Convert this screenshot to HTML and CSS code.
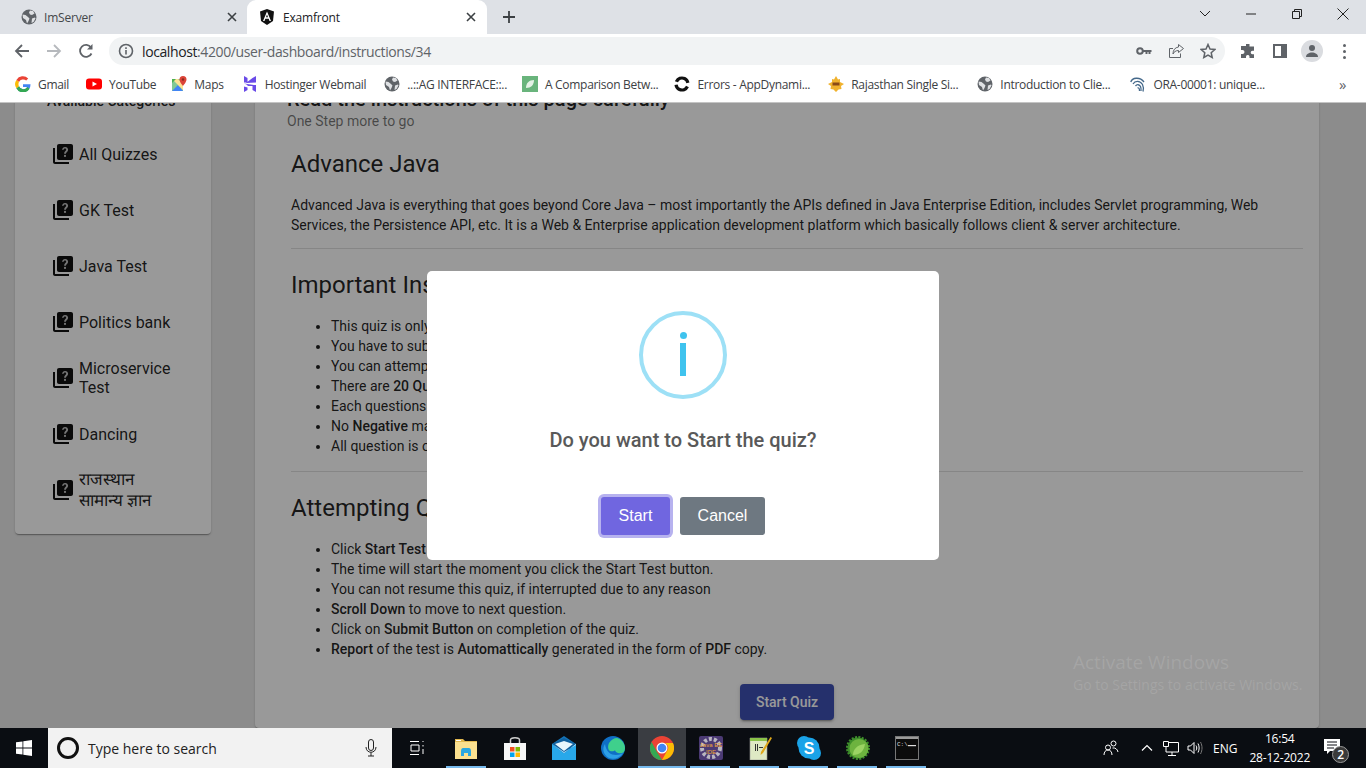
FILE: index.html
```html
<!DOCTYPE html>
<html>
  <head>
    <title>Examfront</title>
    <link rel="stylesheet" href="styles.css">
  </head>
  <body>
    <svg class="defs" width="0" height="0">
      <symbol id="globe" viewBox="0 0 16 16">
        <circle cx="8" cy="8" r="7.5" fill="#5f6368"/>
        <path d="M1.500 5.500l3 .5 2.500 2 1.500 1.500-1 2.500-1.500 2.500-1-3.500-3-2zM9 1.500l3 .5 1.500 2.500-2.500 1.500-2-.5-1-2zM11 9.500l3-1 .5 1-2 3.500-2 1z" fill="#dfe1e4"/>
      </symbol>
      <symbol id="quiz" viewBox="0 0 24 24">
        <path d="M4 6H2v14c0 1.100.9 2 2 2h14v-2H4V6z" fill="#111"/>
        <path d="M20 2H8c-1.100 0-2 .9-2 2v12c0 1.100.9 2 2 2h12c1.100 0 2-.9 2-2V4c0-1.100-.9-2-2-2z" fill="#111"/>
        <path d="M14 12.800a1.100 1.100 0 110 2.200 1.100 1.100 0 010-2.200zM11 7.800C11.300 6.200 12.500 5 14.100 5c1.800 0 3 1.200 3 2.700 0 2.200-2.100 2.300-2.200 4h-1.800c0-2.500 2.100-2.600 2.100-4 0-.7-.5-1.200-1.200-1.200-.7 0-1.200.5-1.400 1.300z" fill="#c4c4c4"/>
      </symbol>
    </svg>

    <div class="tabstrip">
      <div class="tab">
        <svg class="fav"><use href="#globe"/></svg>
        <span class="tab-title">ImServer</span>
        <svg class="tab-x" viewBox="0 0 10 10"><path d="M1 1l8 8M9 1l-8 8"/></svg>
      </div>
      <div class="tab tab-active">
        <svg class="fav" viewBox="0 0 16 16">
          <path d="M8 0L1 2.500l1 9.500L8 16l6-4 1-9.500z" fill="#111"/>
          <path d="M8 2.500L4 12h1.500l.8-2.200h3.400l.8 2.200H12zM7 8.300l1-2.800 1 2.800z" fill="#fff"/>
        </svg>
        <span class="tab-title">Examfront</span>
        <svg class="tab-x" viewBox="0 0 10 10"><path d="M1 1l8 8M9 1l-8 8"/></svg>
      </div>
      <svg class="new-tab" viewBox="0 0 12 12"><path d="M6 0v12M0 6h12"/></svg>
      <div class="win-btns">
        <svg class="win-chev" viewBox="0 0 12 8"><path d="M1 1l5 5 5-5"/></svg>
        <svg class="win-min" viewBox="0 0 10 2"><path d="M0 1h10"/></svg>
        <svg class="win-max" viewBox="0 0 10 10"><path d="M.5 2.500h7v7h-7zM2.500 2.500v-2h7v7h-2"/></svg>
        <svg class="win-close" viewBox="0 0 12 12"><path d="M.5.5l11 11M11.500.5l-11 11"/></svg>
      </div>
    </div>

    <div class="toolbar">
      <svg class="nav-ic" viewBox="0 0 16 16"><path d="M15 8H2M8 2L2 8l6 6" stroke="#5f6368"/></svg>
      <svg class="nav-ic" viewBox="0 0 16 16"><path d="M1 8h13M8 2l6 6-6 6" stroke="#b6b9bd"/></svg>
      <svg class="nav-ic" viewBox="0 0 16 16"><path d="M13.500 10.500A6 6 0 1113 4.500" stroke="#5f6368"/><path d="M14.500 1v5.500H9z" fill="#5f6368" stroke="none"/></svg>
      <div class="omnibox">
        <svg class="info-ic" viewBox="0 0 16 16"><circle cx="8" cy="8" r="6.500" fill="none" stroke="#5f6368" stroke-width="1.600"/><path d="M7.200 7h1.600v4.500H7.200zM7.200 4.300h1.600v1.600H7.200z" fill="#5f6368"/></svg>
        <span class="url"><b>localhost</b>:4200/user-dashboard/instructions/34</span>
        <svg class="omni-ic" viewBox="0 0 16 16"><circle cx="4" cy="8" r="2.800" fill="none" stroke="#5f6368" stroke-width="2"/><path d="M6.500 7h9v2h-1v2h-2V9h-1v2h-2V9h-3z" fill="#5f6368"/></svg>
        <svg class="omni-ic" viewBox="0 0 16 16"><path d="M10.500 1.500l5 4-5 4V7.500C7.500 7.500 6 9 5 11c0-4 2-6.500 5.500-7zM12.500 10.500v4H1.500v-9H5" fill="none" stroke="#5f6368"/></svg>
        <svg class="omni-ic" viewBox="0 0 16 16"><path d="M8 1.500l2 4.500 4.800.5-3.600 3.200 1 4.800L8 12l-4.200 2.500 1-4.800L1.200 6.500 6 6z" fill="none" stroke="#5f6368" stroke-width="1.500"/></svg>
      </div>
      <svg class="tool-ic tool-ext" viewBox="0 0 16 16"><path d="M6 1h3.500v2.500H14v4.200h-1.500a1.800 1.800 0 000 3.600H14V15H9.500v-1.500a1.800 1.800 0 00-3.500 0V15H1v-4h1.500a2 2 0 000-4H1V3h5z" fill="#5f6368"/></svg>
      <svg class="tool-ic" viewBox="0 0 16 16"><path d="M1 1h14v14H1zM3 3v10h6V3z" fill="#5f6368" fill-rule="evenodd"/></svg>
      <div class="avatar">
        <svg viewBox="0 0 24 24"><circle cx="12" cy="8" r="4" fill="#5f6368"/><path d="M4 20c0-4 4-6 8-6s8 2 8 6z" fill="#5f6368"/></svg>
      </div>
      <div class="kebab"><i></i><i></i><i></i></div>
    </div>

    <div class="bookmarks">
      <div class="bm">
        <svg class="fav" viewBox="0 0 16 16"><path d="M15.500 8.200H8v2.800h4.300A4.600 4.600 0 014 10.300L1.400 12.300A7.600 7.600 0 0015.500 8.200z" fill="#4285f4"/><path d="M1.400 12.300L4 10.300a4.600 4.600 0 008.300.7l2.300 1.800A7.600 7.600 0 011.400 12.300z" fill="#34a853"/><path d="M1.400 3.900A7.600 7.600 0 0113.200 2.500l-2 2A4.700 4.700 0 004 6z" fill="#ea4335"/><path d="M1.400 3.900L4 6a4.700 4.700 0 000 4.300l-2.600 2a7.600 7.600 0 010-8.400z" fill="#fbbc05"/></svg>
        <span>Gmail</span>
      </div>
      <div class="bm">
        <svg class="fav" viewBox="0 0 16 16"><rect y="2.500" width="16" height="11" rx="3" fill="#f00"/><path d="M6.500 5.500v5L11 8z" fill="#fff"/></svg>
        <span>YouTube</span>
      </div>
      <div class="bm bm-maps">
        <svg class="fav" viewBox="0 0 16 16"><path d="M1 3h11v12H1z" fill="#81c995"/><path d="M1 15l6-6 5 6z" fill="#4285f4"/><path d="M1 3l11 11V8L7 3z" fill="#fde293"/><path d="M5 3L1 7V3z" fill="#4caf50"/><path d="M12 0a3.500 3.500 0 00-3.500 3.500C8.500 6 12 10 12 10s3.500-4 3.500-6.500A3.500 3.500 0 0012 0z" fill="#db4437"/><circle cx="12" cy="3.500" r="1.200" fill="#8b2a20"/></svg>
        <span>Maps</span>
      </div>
      <div class="bm bm-host">
        <svg class="fav" viewBox="0 0 16 16"><path d="M2 0l3.500 2v4.500H2zM10.500 2L14 0v6.500l-10 .5zM2 7.500l10 1.500H14V16l-3.500-2V10H5.500V9L2 7.500zM2 10.500l3.500 1V14L2 16z" fill="#6a4be8"/></svg>
        <span>Hostinger Webmail</span>
      </div>
      <div class="bm bm-ag">
        <svg class="fav"><use href="#globe"/></svg>
        <span>..::AG INTERFACE::..</span>
      </div>
      <div class="bm bm-cmp">
        <svg class="fav" viewBox="0 0 16 16"><rect width="16" height="16" fill="#69b47c"/><path d="M4 12c0-5 3-8 8-8 0 5-3 8-8 8z" fill="#e4f2e6"/></svg>
        <span>A Comparison Betw...</span>
      </div>
      <div class="bm bm-err">
        <svg class="fav" viewBox="0 0 16 16"><circle cx="8" cy="8" r="6" fill="none" stroke="#111" stroke-width="3.200" stroke-dasharray="15 3 15 5" transform="rotate(25 8 8)"/></svg>
        <span>Errors - AppDynami...</span>
      </div>
      <div class="bm bm-raj">
        <svg class="fav" viewBox="0 0 16 16"><path d="M8 0l2 3.500 2-.5 0 3 4 2-3 2 .5 3-3 .5L8 16l-2.500-2.500-3-.5.5-3-3-2 4-2 0-3 2 .5z" fill="#f0b22e"/><rect x="4.500" y="6.500" width="7" height="3" fill="#8a4a16"/></svg>
        <span>Rajasthan Single Si...</span>
      </div>
      <div class="bm bm-intro">
        <svg class="fav"><use href="#globe"/></svg>
        <span>Introduction to Clie...</span>
      </div>
      <div class="bm bm-ora">
        <svg class="fav" viewBox="0 0 16 16" fill="none" stroke="#44688a" stroke-width="1.300"><path d="M.8 6C2 1.500 10 .5 14 6M3 8c2-3.500 7-3.500 9.500.5 1 2 1 5 .5 7M5.500 10c1.500-2 4-1.500 5 .5.700 1.500.7 3 .5 4.500M7.500 12c1-.5 2 0 2 3"/></svg>
        <span>ORA-00001: unique...</span>
      </div>
      <span class="bm-more">&raquo;</span>
    </div>

    <div class="viewport">
      <div class="page">
        <div class="side-card">
          <h3 class="side-title">Available Categories</h3>
          <div class="side-item"><svg class="quiz-ic"><use href="#quiz"/></svg><span>All Quizzes</span></div>
          <div class="side-item"><svg class="quiz-ic"><use href="#quiz"/></svg><span>GK Test</span></div>
          <div class="side-item"><svg class="quiz-ic"><use href="#quiz"/></svg><span>Java Test</span></div>
          <div class="side-item"><svg class="quiz-ic"><use href="#quiz"/></svg><span>Politics bank</span></div>
          <div class="side-item"><svg class="quiz-ic"><use href="#quiz"/></svg><span>Microservice Test</span></div>
          <div class="side-item"><svg class="quiz-ic"><use href="#quiz"/></svg><span>Dancing</span></div>
          <div class="side-item"><svg class="quiz-ic"><use href="#quiz"/></svg><span>राजस्थान<br>सामान्य ज्ञान</span></div>
        </div>
        <div class="main-card">
          <h2 class="main-title">Read the instructions of this page carefully</h2>
          <p class="main-sub">One Step more to go</p>
          <div class="content">
            <h1>Advance Java</h1>
            <p class="desc">Advanced Java is everything that goes beyond Core Java – most importantly the APIs defined in Java Enterprise Edition, includes Servlet programming, Web Services, the Persistence API, etc. It is a Web &amp; Enterprise application development platform which basically follows client &amp; server architecture.</p>
            <hr>
            <h1>Important Instructions</h1>
            <ul>
              <li>This quiz is only for practice purpose.</li>
              <li>You have to submit quiz within time.</li>
              <li>You can attempt the quiz any number of times.</li>
              <li>There are <b>20 Questions</b> in this quiz.</li>
              <li>Each questions carries 5 marks.</li>
              <li>No <b>Negative</b> marking for wrong ones.</li>
              <li>All question is of MCQ types.</li>
            </ul>
            <hr>
            <h1>Attempting Quiz</h1>
            <ul>
              <li>Click <b>Start Test</b> button to start the quiz.</li>
              <li>The time will start the moment you click the Start Test button.</li>
              <li>You can not resume this quiz, if interrupted due to any reason</li>
              <li><b>Scroll Down</b> to move to next question.</li>
              <li>Click on <b>Submit Button</b> on completion of the quiz.</li>
              <li><b>Report</b> of the test is <b>Automattically</b> generated in the form of <b>PDF</b> copy.</li>
            </ul>
            <div class="start-row"><button class="start-quiz">Start Quiz</button></div>
          </div>
        </div>
      </div>
      <div class="backdrop">
        <div class="modal">
          <div class="info-ring"><span class="info-dot"></span><span class="info-bar"></span></div>
          <h2 class="modal-title">Do you want to Start the quiz?</h2>
          <div class="modal-actions">
            <button class="btn btn-confirm">Start</button>
            <button class="btn btn-cancel">Cancel</button>
          </div>
        </div>
      </div>
      <div class="activate">
        <div class="activate-big">Activate Windows</div>
        <div class="activate-small">Go to Settings to activate Windows.</div>
      </div>
    </div>

    <div class="taskbar">
      <div class="start-btn">
        <svg viewBox="0 0 16 16"><path d="M0 2.300l6.500-.9v6.200H0zM7.300 1.300L16 0v7.600H7.300zM0 8.400h6.500v6.200L0 13.700zM7.300 8.400H16V16l-8.700-1.300z" fill="#fff"/></svg>
      </div>
      <div class="search">
        <span class="cortana"></span>
        <span class="search-text">Type here to search</span>
        <svg class="mic" viewBox="0 0 12 18"><rect x="3.500" y=".5" width="5" height="11" rx="2.500" fill="none" stroke="#222"/><path d="M1 8c0 7 10 7 10 0M6 13.500V17M3 17h6" fill="none" stroke="#222"/></svg>
      </div>
      <div class="task-icons">
        <div class="ti"><svg viewBox="0 0 16 16" fill="none" stroke="#fff"><path d="M1 1.500h9M1 14.500h9M2 5h8v6H2zM14 1v1M14 5v1.500M14 9v5"/></svg></div>
        <div class="ti ti-on"><svg viewBox="0 0 24 24"><path d="M1 3h8l2 2h12v5H1z" fill="#e2b84f"/><path d="M1 6h22v17H1z" fill="#fbe08f"/><path d="M7 15c0-2 1-3 2-3h6c1 0 2 1 2 3v5h-3v-3h-4v3H7z" fill="#2ba7e0"/><path d="M2 4h5v1H2z" fill="#fff"/></svg></div>
        <div class="ti"><svg viewBox="0 0 24 24"><path d="M7.500 8V4c0-3 9-3 9 0v4" fill="none" stroke="#ccc" stroke-width="1.500"/><path d="M1 7h22v17H1z" fill="#f7f7f7"/><path d="M7 11h4.500v4.500H7z" fill="#f25022"/><path d="M12.500 11H17v4.500h-4.500z" fill="#7fba00"/><path d="M7 16.500h4.500V21H7z" fill="#00a4ef"/><path d="M12.500 16.500H17V21h-4.500z" fill="#ffb900"/></svg></div>
        <div class="ti"><svg viewBox="0 0 24 24"><path d="M0 8l12-8 12 8v16H0z" fill="#1373b8"/><path d="M0 8h24v16H0z" fill="#28a8ea"/><path d="M0 8l12 9 12-9L12 2z" fill="#0f5f9e"/><path d="M0 8l12 9 12-9v1l-12 7z" fill="#bfe6fa"/><path d="M3 8l9-3 9 3-9 7z" fill="#e8f6fd"/></svg></div>
        <div class="ti"><svg viewBox="0 0 24 24"><circle cx="12" cy="12" r="12" fill="#0f6fc5"/><path d="M24 12c0 5-4 6-7 5-3-1-4-4-2-6 .8 3-2 5-6 4C7 14 6.500 10 8 7c2.500-3.500 5-5 8-5 4 1 8 5 8 10z" fill="#3fd08c"/><path d="M8 22c-6-3-7-10-4-14 1 8 6 11 11 11 3 0 5-1 7-2-3 5-9 7-14 5z" fill="#2d9fe6"/></svg></div>
        <div class="ti ti-active"><svg viewBox="0 0 24 24"><circle cx="12" cy="12" r="12" fill="#ea4335"/><path d="M1.600 6L7 16l5 8A12 12 0 011.600 6z" fill="#34a853"/><path d="M12 7h11a12 12 0 01-11 17l5-9a5 5 0 00-5-8z" fill="#fbbc05"/><circle cx="12" cy="12" r="5.500" fill="#fff"/><circle cx="12" cy="12" r="4.300" fill="#4285f4"/></svg></div>
        <div class="ti ti-on"><svg viewBox="0 0 24 24"><rect width="24" height="24" rx="2" fill="#4b3a74"/><circle cx="12" cy="12" r="9" fill="none" stroke="#b9b6c0" stroke-width="4" stroke-dasharray="3 2"/><text x="12" y="11" text-anchor="middle" class="ide-txt">Java EE</text><text x="12" y="18" text-anchor="middle" class="ide-txt">IDE</text></svg></div>
        <div class="ti ti-on"><svg viewBox="0 0 24 24"><path d="M2 2h17v22H2z" fill="#dfe9c4" stroke="#999" stroke-width=".6"/><path d="M2 2h17v3H2z" fill="#8bc34a"/><path d="M7 8h1v7H7zM9 8h1v7H9zM11 11h4v1h-4z" fill="#333"/><path d="M22.500 1L24 2 15 17l-2.500 2 .5-3z" fill="#e0a81a"/></svg></div>
        <div class="ti ti-on"><svg viewBox="0 0 24 24"><circle cx="7" cy="7" r="7" fill="#1aa3e8"/><circle cx="17" cy="17" r="7" fill="#1aa3e8"/><circle cx="12" cy="12" r="10.500" fill="#1aa3e8"/><text x="12" y="18" text-anchor="middle" class="skype-s">S</text></svg></div>
        <div class="ti ti-on"><svg viewBox="0 0 24 24"><circle cx="12" cy="12" r="10.500" fill="#3e8e2b" stroke="#3e8e2b" stroke-width="3" stroke-dasharray="2 1.300"/><circle cx="13" cy="12.500" r="9.500" fill="#6db33f"/><path d="M7 19c0-6 4-10 12-11-1 7-5 11-12 11z" fill="#9bd463"/></svg></div>
        <div class="ti ti-on"><svg viewBox="0 0 24 24"><rect width="24" height="24" fill="#0c0c0c"/><path d="M0 0h24v3H0z" fill="#9a9a9a"/><text x="2" y="10" class="cmd-txt">C:\</text><path d="M13 9h8v1.200h-8z" fill="#ddd"/><rect x=".5" y=".5" width="23" height="23" fill="none" stroke="#777"/></svg></div>
      </div>
      <div class="tray">
        <svg class="tray-ic" viewBox="0 0 16 16" fill="none" stroke="#fff"><circle cx="10.500" cy="3.500" r="2.500"/><circle cx="5" cy="7.500" r="2.500"/><path d="M1 15c0-3 1.500-5 4-5s4 2 4 5M9.500 8c2.500-.5 5 1 5.500 4"/></svg>
        <svg class="tray-ic tray-up" viewBox="0 0 12 7" fill="none" stroke="#fff" stroke-width="1.200"><path d="M1 6l5-5 5 5"/></svg>
        <svg class="tray-ic tray-net" viewBox="0 0 16 16" fill="none" stroke="#fff"><path d="M.5 1.500h5v5h-5zM5.500 2.500h10v9.500H3V6.500M9 12v3M5 15.500h8"/></svg>
        <svg class="tray-ic tray-vol" viewBox="0 0 16 16" fill="none" stroke="#fff"><path d="M1 6h2.500L7 2.500v11L3.500 10H1zM9 5.500c1 1.700 1 3.300 0 5M11 3.500c1.500 3 1.500 6 0 9"/><path d="M13.500 2c2 4 2 8 0 12" stroke="#777"/></svg>
        <span class="tray-lang">ENG</span>
        <div class="clock"><span>16:54</span><span>28-12-2022</span></div>
        <div class="notif">
          <svg viewBox="0 0 16 16"><path d="M0 0h16v12H6l-3 3v-3H0z" fill="#fff"/><path d="M3 3h10M3 6h10M3 9h7" stroke="#0a0d12"/></svg>
          <span class="notif-badge">2</span>
        </div>
      </div>
    </div>
  </body>
</html>
```

FILE: styles.css
```css
* {
  box-sizing: border-box;
}
html, body {
  margin: 0;
  height: 768px;
  overflow: hidden;
}
body {
  font-family: Roboto, "Liberation Sans", sans-serif;
  display: flex;
  flex-direction: column;
  background: #fff;
}
.defs {
  position: absolute;
}

/* chrome */
.tabstrip {
  height: 34px;
  background: #dee1e6;
  display: flex;
  align-items: flex-end;
  padding-left: 8px;
  flex: none;
}
.tab {
  width: 240px;
  height: 34px;
  padding: 0 8px 0 13px;
  display: flex;
  align-items: center;
  font: 12px "Open Sans", sans-serif;
  color: #45474a;
  letter-spacing: -0.2px;
}
.tab-active {
  background: #fff;
  color: #202124;
  border-radius: 9px 9px 0 0;
  margin-left: -1px;
  padding-left: 12px;
}
.tab-active .tab-title {
  margin-left: 8px;
}
.fav {
  width: 16px;
  height: 16px;
  flex: none;
}
.tab-title {
  margin-left: 7px;
  flex: 1;
}
.tab-x {
  width: 10px;
  height: 10px;
  fill: none;
  stroke: #3c4043;
  stroke-width: 1.6;
  margin-right: 3px;
}
.new-tab {
  width: 12px;
  height: 12px;
  margin: 0 0 11px 16px;
  fill: none;
  stroke: #3c4043;
  stroke-width: 1.8;
}
.win-btns {
  margin-left: auto;
  height: 28px;
  align-self: flex-start;
  display: flex;
  align-items: center;
  padding-right: 17px;
}
.win-btns svg {
  fill: none;
  stroke: #222;
}
.win-chev {
  width: 12px;
  height: 8px;
  margin-right: 35px;
}
.win-min {
  width: 10px;
  height: 2px;
  margin-right: 36px;
}
.win-max {
  width: 10px;
  height: 10px;
  margin-right: 35px;
}
.win-close {
  width: 12px;
  height: 12px;
}

.toolbar {
  height: 34px;
  display: flex;
  align-items: center;
  padding-left: 14px;
  flex: none;
}
.nav-ic {
  width: 16px;
  height: 16px;
  margin-right: 16px;
  fill: none;
  stroke-width: 1.8;
}
.omnibox {
  margin-left: -1px;
  width: 1116px;
  height: 28px;
  background: #f1f3f4;
  border-radius: 14px;
  display: flex;
  align-items: center;
  padding: 0 9px;
}
.info-ic {
  width: 16px;
  height: 16px;
  margin-right: 8px;
}
.url {
  font: 14px "Open Sans", sans-serif;
  letter-spacing: -0.4px;
  color: #5f6368;
  flex: 1;
}
.url b {
  font-weight: 400;
  color: #202124;
}
.omni-ic {
  width: 16px;
  height: 16px;
  margin-left: 16px;
}
.tool-ic {
  width: 16px;
  height: 16px;
  margin-left: 16px;
}
.tool-ext {
  margin-left: 15px;
}
.avatar {
  width: 22px;
  height: 22px;
  border-radius: 50%;
  background: #dadce0;
  margin-left: 13px;
  padding: 2px;
}
.avatar svg {
  display: block;
  width: 18px;
  height: 18px;
}
.kebab {
  margin-left: 20px;
  display: flex;
  flex-direction: column;
  gap: 3px;
}
.kebab i {
  display: block;
  width: 3px;
  height: 3px;
  border-radius: 50%;
  background: #5f6368;
}

.bookmarks {
  height: 35px;
  border-bottom: 1px solid #c4c4c4;
  display: flex;
  align-items: center;
  padding: 0 0 2px 15px;
  gap: 17px;
  position: relative;
  flex: none;
  font: 12px "Open Sans", sans-serif;
  letter-spacing: -0.3px;
  color: #3c4043;
}
.bm {
  display: flex;
  align-items: center;
  gap: 7px;
  white-space: nowrap;
}
.bm-maps {
  margin-left: -2px;
}
.bm-host {
  margin-left: 1px;
}
.bm-ag {
  margin-left: 1px;
}
.bm-cmp {
  margin-left: -2px;
}
.bm-err {
  margin-left: -1px;
}
.bm-raj {
  margin-left: 1px;
}
.bm-intro {
  margin-left: 2px;
}
.bm-ora {
  margin-left: 3px;
}
.bm-more {
  position: absolute;
  left: 1339px;
  top: 6px;
  font-size: 15px;
  color: #5f6368;
}

/* page */
.viewport {
  height: 625px;
  position: relative;
  overflow: hidden;
  flex: none;
}
.page {
  background: #eaeaea;
  height: 100%;
  display: flex;
  align-items: flex-start;
  padding-left: 15px;
  color: rgba(0, 0, 0, 0.87);
  font-size: 14px;
}
.side-card {
  width: 196px;
  margin-top: -25px;
  height: 456px;
  background: #fff;
  border-radius: 4px;
  box-shadow: 0 2px 1px -1px rgba(0,0,0,.2), 0 1px 1px rgba(0,0,0,.14), 0 1px 3px rgba(0,0,0,.12);
  padding: 13px 16px 0 36px;
}
.side-title {
  margin: 0 0 15px -4px;
  font-size: 14px;
  font-weight: 500;
  line-height: 20px;
}
.side-item {
  display: flex;
  align-items: center;
  gap: 4px;
  font-size: 16px;
  line-height: 19px;
  height: 56px;
}
.side-item:last-child {
  font-size: 17px;
  line-height: 21px;
}
.quiz-ic {
  width: 24px;
  height: 24px;
  flex: none;
}
.main-card {
  width: 1064px;
  margin-left: 44px;
  height: 650px;
  margin-top: -25px;
  background: #fff;
  border-radius: 4px;
  box-shadow: 0 2px 1px -1px rgba(0,0,0,.2), 0 1px 1px rgba(0,0,0,.14), 0 1px 3px rgba(0,0,0,.12);
  padding: 9px 16px 0 32px;
}
.main-title {
  margin: 0;
  font-size: 20px;
  line-height: 24px;
  font-weight: 500;
}
.main-sub {
  margin: 0;
  line-height: 20px;
  color: rgba(0, 0, 0, 0.54);
}
.content {
  margin-left: 4px;
  padding-top: 17px;
}
.content h1 {
  margin: 0;
  font-size: 24px;
  line-height: 32px;
  font-weight: 400;
}
.desc {
  margin: 15px 0 0;
  line-height: 20px;
}
.content hr {
  margin: 13px 0 20px;
  border: 0;
  border-top: 1px solid rgba(0, 0, 0, 0.12);
}
.content ul + hr {
  margin-top: 15px;
}
.content ul {
  margin: 15px 0 0;
  padding-left: 40px;
  line-height: 20px;
}
.content b {
  font-weight: 500;
}
.start-row {
  display: flex;
  justify-content: center;
  margin-top: 25px;
  padding-right: 20px;
}
.start-quiz {
  width: 94px;
  height: 36px;
  border: 0;
  border-radius: 4px;
  background: #3f51b5;
  color: #fff;
  font: 500 14px Roboto, sans-serif;
  box-shadow: 0 3px 1px -2px rgba(0,0,0,.2), 0 2px 2px rgba(0,0,0,.14), 0 1px 5px rgba(0,0,0,.12);
}

/* modal */
.backdrop {
  position: absolute;
  inset: 0;
  background: rgba(0, 0, 0, 0.4);
  display: flex;
  justify-content: center;
  padding-top: 168px;
}
.modal {
  width: 512px;
  height: 289px;
  background: #fff;
  border-radius: 5px;
  display: flex;
  flex-direction: column;
  align-items: center;
  padding-top: 40px;
}
.info-ring {
  width: 88px;
  height: 88px;
  border: 4px solid #9de0f6;
  border-radius: 50%;
  display: flex;
  flex-direction: column;
  align-items: center;
  padding-top: 17px;
}
.info-dot {
  width: 7px;
  height: 7px;
  border-radius: 50%;
  background: #3fc3ee;
}
.info-bar {
  width: 6px;
  height: 33px;
  background: #3fc3ee;
  margin-top: 4px;
}
.modal-title {
  margin: 28px 0 0;
  font-size: 20px;
  line-height: 26px;
  font-weight: 500;
  color: #595959;
}
.modal-actions {
  margin-top: 44px;
  display: flex;
  gap: 10px;
}
.btn {
  height: 38px;
  border: 0;
  border-radius: 3px;
  color: #fff;
  font: 16px "Liberation Sans", sans-serif;
}
.btn-confirm {
  width: 69px;
  background: #7066e0;
  box-shadow: 0 0 0 3px rgba(112, 102, 224, 0.5);
}
.btn-cancel {
  width: 85px;
  background: #6e7881;
}

.activate {
  position: absolute;
  left: 1073px;
  top: 547px;
  color: rgba(255, 255, 255, 0.13);
  font-family: "Open Sans", sans-serif;
  pointer-events: none;
}
.activate-big {
  font-size: 19px;
  line-height: 24px;
}
.activate-small {
  font-size: 14px;
  line-height: 22px;
}

/* taskbar */
.taskbar {
  height: 40px;
  background: #0a0d12;
  display: flex;
  align-items: stretch;
  flex: none;
  color: #fff;
}
.start-btn {
  width: 48px;
  display: flex;
  align-items: center;
  justify-content: center;
}
.start-btn svg {
  width: 16px;
  height: 16px;
}
.search {
  width: 344px;
  background: #f2f2f2;
  display: flex;
  align-items: center;
  padding: 0 15px 0 9px;
  color: #222;
  font: 14px "Open Sans", sans-serif;
}
.cortana {
  width: 22px;
  height: 22px;
  border: 3px solid #111;
  border-radius: 50%;
  flex: none;
}
.search-text {
  margin-left: 9px;
  flex: 1;
}
.mic {
  width: 12px;
  height: 18px;
}
.task-icons {
  display: flex;
  width: 539px;
}
.ti {
  width: 49px;
  display: flex;
  align-items: center;
  justify-content: center;
  position: relative;
}
.ti:first-child {
  margin-left: 1px;
}
.ti svg {
  width: 24px;
  height: 24px;
}
.ti:first-child svg {
  width: 16px;
  height: 16px;
}
.ti-on::after, .ti-active::after {
  content: "";
  position: absolute;
  left: 4px;
  right: 5px;
  bottom: 0;
  height: 2px;
  background: #76b9ed;
}
.ti-active {
  background: #3a3d42;
}
.ti-active::after {
  left: 0;
  right: 0;
}
.skype-s {
  font: bold 16px "Liberation Sans", sans-serif;
  fill: #fff;
}
.ide-txt {
  font: 6px "Liberation Sans", sans-serif;
  fill: #f0a63a;
}
.cmd-txt {
  font: 6px "Liberation Mono", monospace;
  fill: #ddd;
}
.tray {
  flex: 1;
  display: flex;
  align-items: center;
  padding-left: 172px;
}
.tray-ic {
  width: 16px;
  height: 16px;
}
.tray-up {
  width: 12px;
  height: 8px;
  margin-left: 22px;
}
.tray-net {
  margin-left: 10px;
}
.tray-vol {
  margin-left: 8px;
}
.tray-lang {
  font: 12px "Open Sans", sans-serif;
  margin-left: 10px;
}
.clock {
  display: flex;
  flex-direction: column;
  align-items: center;
  font: 12px/19px "Open Sans", sans-serif;
  letter-spacing: -0.2px;
  margin-left: 12px;
}
.notif {
  position: relative;
  margin-left: 14px;
  width: 16px;
  height: 16px;
  margin-top: -3px;
}
.notif svg {
  display: block;
  width: 16px;
  height: 16px;
}
.notif-badge {
  position: absolute;
  left: 8px;
  top: 7px;
  width: 17px;
  height: 17px;
  border-radius: 50%;
  background: #3a3a3a;
  border: 1px solid #999;
  font: 600 12px/15px "Open Sans", sans-serif;
  text-align: center;
}
```
